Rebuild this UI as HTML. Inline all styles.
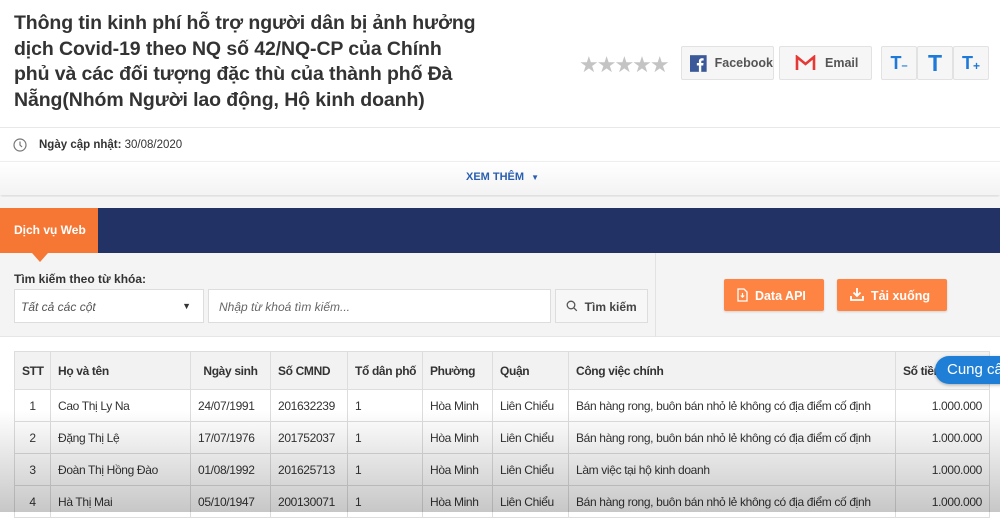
<!DOCTYPE html>
<html><head><meta charset="utf-8"><style>
*{box-sizing:border-box;margin:0;padding:0}
body{width:1000px;height:512px;overflow:hidden;background:#fff;font-family:"Liberation Sans",sans-serif;position:relative;color:#333}
.abs{position:absolute}
h1{position:absolute;left:14px;top:11px;width:465px;font-size:19.5px;line-height:25.5px;font-weight:bold;color:#333;letter-spacing:-.1px}
.stars{left:579px;top:52px;font-size:22px;color:#c4c4c4;letter-spacing:-2px}
.btn{position:absolute;top:46px;height:34px;background:#f6f6f6;border:1px solid #e2e2e2;border-radius:2px;font-size:12.5px;font-weight:bold;color:#555;display:flex;align-items:center}
.tb{width:36px;justify-content:center;color:#1e7ad8;font-size:18px}
table{border-collapse:collapse;position:absolute;left:14px;top:351px;width:976px;font-size:12px;letter-spacing:-.35px;table-layout:fixed}
td,th{border:1px solid #ddd;height:32px;padding:0 7px;white-space:nowrap;text-align:left;overflow:hidden}
th{height:38px;background:#f2f2f2;font-weight:bold;color:#333}
td{background:#fff;color:#333}
</style></head><body>
<h1>Thông tin kinh phí hỗ trợ người dân bị ảnh hưởng dịch Covid-19 theo NQ số 42/NQ-CP của Chính phủ và các đối tượng đặc thù của thành phố Đà Nẵng(Nhóm Người lao động, Hộ kinh doanh)</h1>
<div class="abs stars">★★★★★</div>
<div class="btn" style="left:681px;width:93px;padding-left:8px"><svg width="17" height="17" viewBox="0 0 17 17"><rect width="17" height="17" fill="#3b5998"/><path d="M11.5 17V10.5H13.5L13.8 8H11.5V6.6c0-.7.2-1.2 1.2-1.2h1.2V3.2c-.2 0-1-.1-1.8-.1-1.8 0-3 1.1-3 3.1V8H7v2.5h2.1V17z" fill="#fff"/></svg><span style="margin-left:8px">Facebook</span></div>
<div class="btn" style="left:779px;width:93px;padding-left:15px"><svg width="21" height="16" viewBox="0 0 21 16"><path d="M2 15V2l8.5 7L19 2v13" fill="none" stroke="#e53935" stroke-width="2.6"/></svg><span style="margin-left:9px">Email</span></div>
<div class="btn tb" style="left:881px"><b>T</b><span style="font-size:11px;margin-top:6px;font-weight:bold">–</span></div>
<div class="btn tb" style="left:917px;font-size:23px"><b>T</b></div>
<div class="btn tb" style="left:953px"><b>T</b><span style="font-size:12px;margin-top:6px;font-weight:bold">+</span></div>
<div class="abs" style="left:0;top:127px;width:1000px;height:1px;background:#e8e8e8"></div>
<svg class="abs" style="left:13px;top:138px" width="14" height="14" viewBox="0 0 14 14"><circle cx="7" cy="7" r="6" fill="none" stroke="#777" stroke-width="1.2"/><path d="M7 3.5V7l2 2" fill="none" stroke="#777" stroke-width="1.2"/></svg>
<div class="abs" style="left:39px;top:139px;font-size:11.5px;color:#333"><b>Ngày cập nhật:</b> 30/08/2020</div>
<div class="abs" style="left:0;top:161px;width:1000px;height:34px;background:linear-gradient(#fff,#f3f3f3);border-top:1px solid #eee;box-shadow:0 2px 3px rgba(0,0,0,.15)"></div>
<div class="abs" style="left:466px;top:171px;font-size:11px;font-weight:bold;color:#2a5fb0">XEM THÊM <span style="font-size:8px;margin-left:4px">▼</span></div>
<div class="abs" style="left:0;top:197px;width:1000px;height:11px;background:#f4f4f4"></div>
<div class="abs" style="left:0;top:208px;width:1000px;height:45px;background:#233264"></div>
<div class="abs" style="left:0;top:208px;width:98px;height:45px;background:#f67733;color:#fff;font-size:12px;font-weight:bold;padding:15px 0 0 14px">Dịch vụ Web</div>
<div class="abs" style="left:0;top:253px;width:1000px;height:84px;background:#f4f4f4;border-bottom:1px solid #e6e6e6"></div>
<div class="abs" style="left:655px;top:253px;width:1px;height:84px;background:#e2e2e2"></div>
<div class="abs" style="left:32px;top:253px;border-left:8px solid transparent;border-right:8px solid transparent;border-top:9px solid #f67733"></div>
<div class="abs" style="left:14px;top:272px;font-size:12px;color:#333;font-weight:bold">Tìm kiếm theo từ khóa:</div>
<div class="abs" style="left:14px;top:289px;width:190px;height:34px;background:#fff;border:1px solid #ddd;font-size:12px;font-style:italic;color:#555;padding:10px 0 0 6px">Tất cả các cột<span style="position:absolute;right:12px;top:11px;font-size:9px;font-style:normal;color:#333">▼</span></div>
<div class="abs" style="left:208px;top:289px;width:343px;height:34px;background:#fff;border:1px solid #ddd;font-size:12px;font-style:italic;color:#666;padding:10px 0 0 10px">Nhập từ khoá tìm kiếm...</div>
<div class="abs" style="left:555px;top:289px;width:93px;height:34px;background:#f7f7f7;border:1px solid #ddd;font-size:12px;font-weight:bold;color:#444;padding:10px 0 0 10px"><svg width="12" height="12" viewBox="0 0 12 12" style="vertical-align:-1px"><circle cx="5" cy="5" r="3.8" fill="none" stroke="#555" stroke-width="1.3"/><path d="M7.8 7.8l3 3" stroke="#555" stroke-width="1.3"/></svg>&nbsp; Tìm kiếm</div>
<div class="abs" style="left:724px;top:279px;width:100px;height:32px;background:#fe8443;border-radius:2px;color:#fff;font-size:12.5px;font-weight:bold;padding:9px 0 0 13px;box-shadow:0 1px 2px rgba(0,0,0,.15)"><svg width="11" height="14" viewBox="0 0 11 14" style="vertical-align:-2px"><path d="M1 1h6l3 3v9H1z" fill="none" stroke="#fff" stroke-width="1.3"/><path d="M5.5 5v4M3.8 7.5l1.7 1.7 1.7-1.7" fill="none" stroke="#fff" stroke-width="1.2"/></svg>&nbsp; Data API</div>
<div class="abs" style="left:837px;top:279px;width:110px;height:32px;background:#fe8443;border-radius:2px;color:#fff;font-size:12.5px;font-weight:bold;padding:9px 0 0 13px;box-shadow:0 1px 2px rgba(0,0,0,.15)"><svg width="14" height="13" viewBox="0 0 14 13" style="vertical-align:-1px"><path d="M7 0v8M3.5 4.5L7 8l3.5-3.5M1 8v4h12V8" fill="none" stroke="#fff" stroke-width="1.8"/></svg>&nbsp; Tải xuống</div>
<table>
<colgroup><col style="width:36px"><col style="width:140px"><col style="width:80px"><col style="width:77px"><col style="width:75px"><col style="width:70px"><col style="width:76px"><col style="width:327px"><col></colgroup>
<tr><th>STT</th><th>Họ và tên</th><th style="text-align:center">Ngày sinh</th><th>Số CMND</th><th>Tổ dân phố</th><th>Phường</th><th>Quận</th><th>Công việc chính</th><th>Số tiền</th></tr>
<tr><td style="text-align:center">1</td><td>Cao Thị Ly Na</td><td>24/07/1991</td><td>201632239</td><td>1</td><td>Hòa Minh</td><td>Liên Chiểu</td><td>Bán hàng rong, buôn bán nhỏ lẻ không có địa điểm cố định</td><td style="text-align:right">1.000.000</td></tr>
<tr><td style="text-align:center">2</td><td>Đặng Thị Lệ</td><td>17/07/1976</td><td>201752037</td><td>1</td><td>Hòa Minh</td><td>Liên Chiểu</td><td>Bán hàng rong, buôn bán nhỏ lẻ không có địa điểm cố định</td><td style="text-align:right">1.000.000</td></tr>
<tr><td style="text-align:center">3</td><td>Đoàn Thị Hồng Đào</td><td>01/08/1992</td><td>201625713</td><td>1</td><td>Hòa Minh</td><td>Liên Chiểu</td><td>Làm việc tại hộ kinh doanh</td><td style="text-align:right">1.000.000</td></tr>
<tr><td style="text-align:center">4</td><td>Hà Thị Mai</td><td>05/10/1947</td><td>200130071</td><td>1</td><td>Hòa Minh</td><td>Liên Chiểu</td><td>Bán hàng rong, buôn bán nhỏ lẻ không có địa điểm cố định</td><td style="text-align:right">1.000.000</td></tr>
</table>
<div class="abs" style="left:935px;top:356px;width:80px;height:28px;background:#1f7fd6;border-radius:14px 0 0 14px;color:#fff;font-size:15px;padding:5px 0 0 12px;white-space:nowrap;box-shadow:0 1px 3px rgba(0,0,0,.3)">Cung cấp</div>
<div class="abs" style="left:0;top:410px;width:1000px;height:102px;background:linear-gradient(rgba(0,0,0,0),rgba(0,0,0,.22))"></div>
</body></html>
